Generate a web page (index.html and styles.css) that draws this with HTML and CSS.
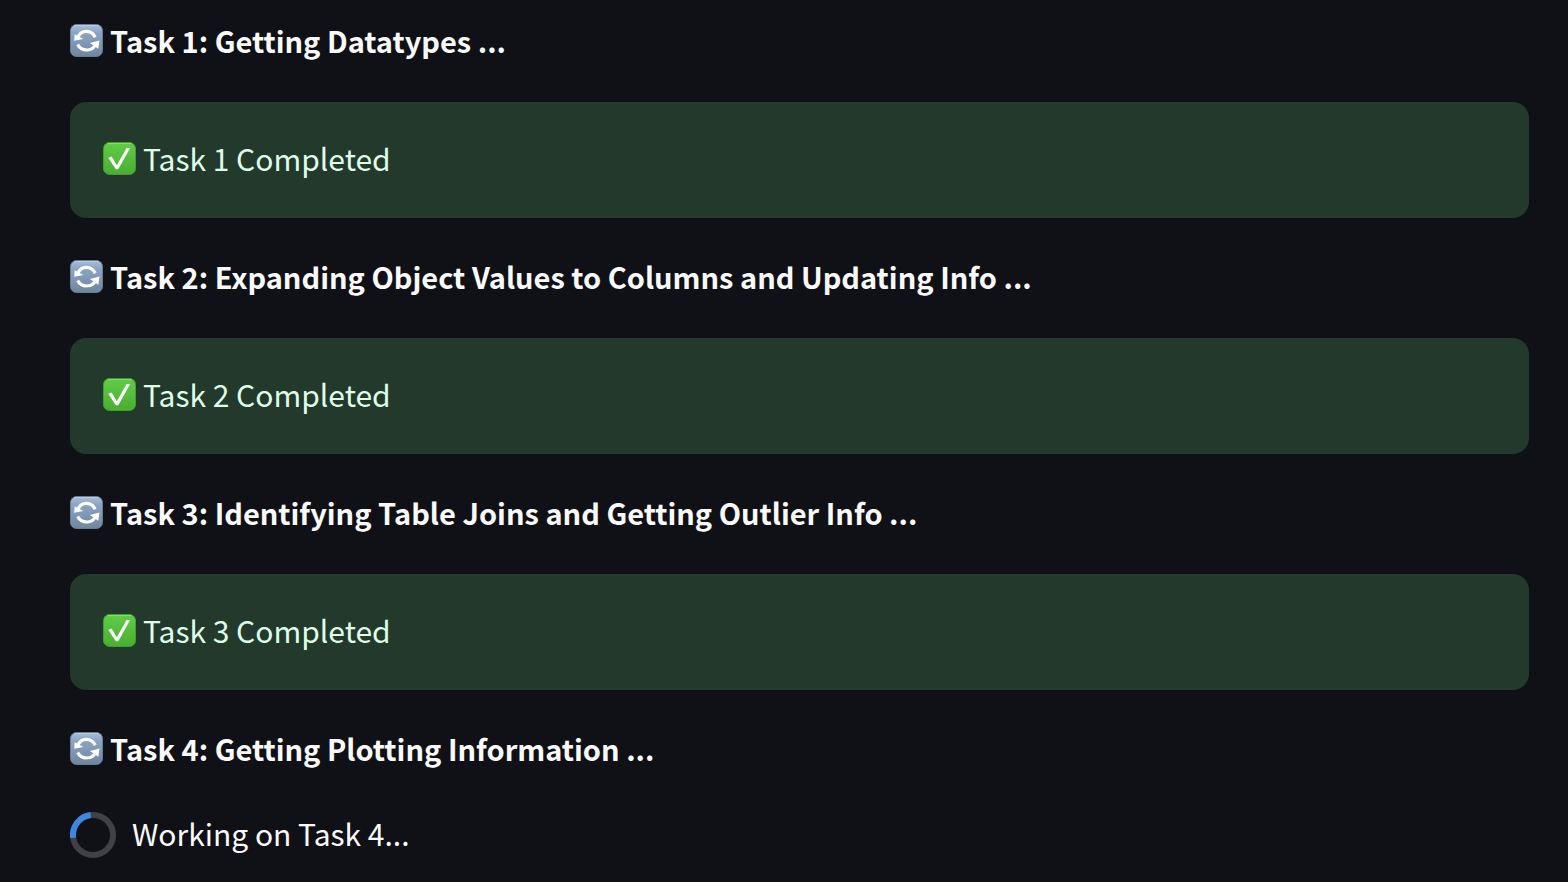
FILE: index.html
```html
<!DOCTYPE html>
<html lang="en">
<head>
<meta charset="utf-8">
<meta name="viewport" content="width=device-width, initial-scale=1">
<title>Task progress</title>
<link rel="stylesheet" href="styles.css">
</head>
<body>
<svg class="sprite" aria-hidden="true">
  <defs>
    <linearGradient id="blue" x1="0" y1="0" x2="0" y2="1">
      <stop offset="0" stop-color="#a9bfdb"/>
      <stop offset="0.25" stop-color="#8ba5c4"/>
      <stop offset="1" stop-color="#6f869f"/>
    </linearGradient>
    <linearGradient id="green" x1="0" y1="0" x2="0" y2="1">
      <stop offset="0" stop-color="#62cc49"/>
      <stop offset="1" stop-color="#49ae30"/>
    </linearGradient>
    <symbol id="refresh" viewBox="0 0 33 33">
      <rect x="0.5" y="0.5" width="32" height="32" rx="6" fill="url(#blue)" stroke="#667d95"/>
      <path d="M5 1.5h23" stroke="#b9cade" stroke-linecap="round"/>
      <g fill="none" stroke="#fff" stroke-width="3.2">
        <path d="M7.900 13.500C11 5.500 21.500 5.500 25.200 13.200"/>
        <path d="M25.300 20.500C22.500 27.700 11.500 28 7.700 20.500"/>
      </g>
      <path d="M4.700 10.200l-.5 6.500 9.200-1.600z" fill="#fff"/>
      <path d="M20 18.900l9.500-2.500-1.200 8.300z" fill="#fff"/>
    </symbol>
    <symbol id="check" viewBox="0 0 33 33">
      <rect x="0.5" y="0.5" width="32" height="32" rx="6" fill="url(#green)" stroke="#41a02b"/>
      <path d="M5 1.500h23" stroke="#82dc6c" stroke-linecap="round"/>
      <path d="M5.300 15.800l3.300-1.300 5.200 8.700L23.600 6h3.500L15.300 27.200h-2.500z" fill="#fff"/>
    </symbol>
  </defs>
</svg>
<main class="tasks">
  <h2 class="task"><svg class="emoji" role="img" aria-label="In progress"><use href="#refresh"/></svg>Task 1: Getting Datatypes ...</h2>
  <div class="alert" role="status"><svg class="emoji" role="img" aria-label="Done"><use href="#check"/></svg>Task 1 Completed</div>
  <h2 class="task"><svg class="emoji" role="img" aria-label="In progress"><use href="#refresh"/></svg>Task 2: Expanding Object Values to Columns and Updating Info ...</h2>
  <div class="alert" role="status"><svg class="emoji" role="img" aria-label="Done"><use href="#check"/></svg>Task 2 Completed</div>
  <h2 class="task"><svg class="emoji" role="img" aria-label="In progress"><use href="#refresh"/></svg>Task 3: Identifying Table Joins and Getting Outlier Info ...</h2>
  <div class="alert" role="status"><svg class="emoji" role="img" aria-label="Done"><use href="#check"/></svg>Task 3 Completed</div>
  <h2 class="task"><svg class="emoji" role="img" aria-label="In progress"><use href="#refresh"/></svg>Task 4: Getting Plotting Information ...</h2>
  <div class="working" role="status">
    <svg class="spinner" viewBox="0 0 46 46" aria-hidden="true">
      <circle cx="23" cy="23" r="20" fill="none" stroke="#414145" stroke-width="6"/>
      <path d="M3.200 25.800A20 20 0 0 1 20.700 3.100" fill="none" stroke="#3d86e2" stroke-width="6"/>
    </svg>
    <span class="working-label">Working on Task 4...</span>
  </div>
</main>
</body>
</html>
```
FILE: styles.css
```css
* {
  box-sizing: border-box;
}

body {
  margin: 0;
  background: #101116;
  color: #fafafa;
  font-family: "Noto Sans CJK SC", "Noto Sans", sans-serif;
  font-size: 30px;
  line-height: 46px;
}

.sprite {
  position: absolute;
  width: 0;
  height: 0;
}

.tasks {
  display: flex;
  flex-direction: column;
  gap: 35px;
  padding: 17px 39px 22px 70px;
}

.task,
.alert,
.working {
  display: flex;
  align-items: center;
  gap: 7px;
}

.task {
  margin: 0;
  padding-bottom: 4px;
  font-size: 29px;
  font-weight: 700;
}

.alert {
  padding: 33px 33px 37px;
  border-radius: 16px;
  background: #23392c;
  color: #dffde9;
}

.emoji {
  flex: none;
  width: 33px;
  height: 33px;
}

.working {
  gap: 16px;
}

.working-label {
  padding-bottom: 4px;
}

.spinner {
  flex: none;
  width: 46px;
  height: 46px;
}
```
